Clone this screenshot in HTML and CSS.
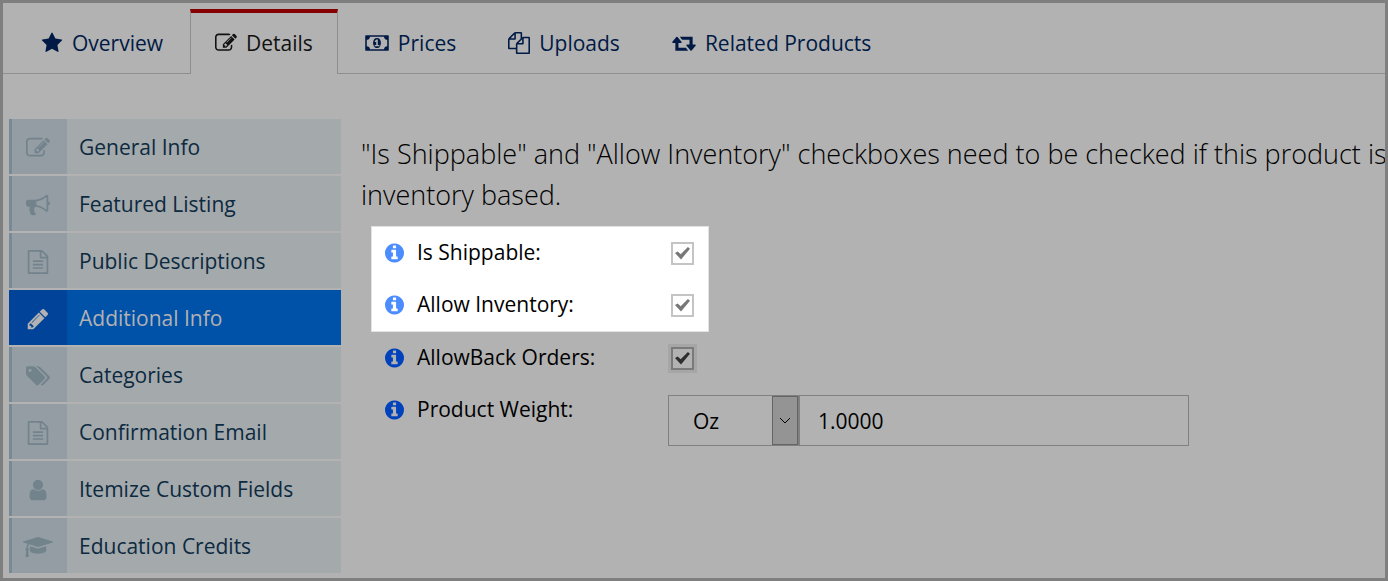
FILE: index.html
```html
<!DOCTYPE html>
<html lang="en">
<head>
    <meta charset="UTF-8">
    <meta name="viewport" content="width=device-width, initial-scale=1.0">
    <title>Product Details</title>
    <link rel="stylesheet" href="styles.css">
</head>
<body>
    <!-- shared icons -->
    <svg class="defs" aria-hidden="true">
        <symbol id="edit" viewBox="0 0 1792 1792"><path d="M888 1184l116-116-152-152-116 116v56h96v96h56zm440-720q-16-16-33 1l-350 350q-17 17-1 33t33-1l350-350q17-17 1-33zm80 594v190q0 119-84.5 203.5t-203.5 84.5h-832q-119 0-203.5-84.5t-84.5-203.5v-832q0-119 84.5-203.5t203.5-84.5h832q63 0 117 25 15 7 18 23 3 17-9 29l-49 49q-14 14-32 8-23-6-45-6h-832q-66 0-113 47t-47 113v832q0 66 47 113t113 47h832q66 0 113-47t47-113v-126q0-13 9-22l64-64q15-15 35-7t20 29zm-96-738l288 288-672 672h-288v-288zm444 132l-92 92-288-288 92-92q28-28 68-28t68 28l152 152q28 28 28 68t-28 68z"/></symbol>
        <symbol id="file" viewBox="0 0 1792 1792"><path d="M1596 380q28 28 48 76t20 88v1152q0 40-28 68t-68 28h-1344q-40 0-68-28t-28-68v-1600q0-40 28-68t68-28h896q40 0 88 20t76 48zm-444-244v376h376q-10-29-22-41l-313-313q-12-12-41-22zm384 1528v-1024h-416q-40 0-68-28t-28-68v-416h-768v1536h1280zm-1024-864q0-14 9-23t23-9h704q14 0 23 9t9 23v64q0 14-9 23t-23 9h-704q-14 0-23-9t-9-23v-64zm736 224q14 0 23 9t9 23v64q0 14-9 23t-23 9h-704q-14 0-23-9t-9-23v-64q0-14 9-23t23-9h704zm0 256q14 0 23 9t9 23v64q0 14-9 23t-23 9h-704q-14 0-23-9t-9-23v-64q0-14 9-23t23-9h704z"/></symbol>
        <symbol id="info" viewBox="128 128 1536 1536"><path d="M1152 1376v-160q0-14-9-23t-23-9h-96v-512q0-14-9-23t-23-9h-320q-14 0-23 9t-9 23v160q0 14 9 23t23 9h96v320h-96q-14 0-23 9t-9 23v160q0 14 9 23t23 9h448q14 0 23-9t9-23zm-128-896v-160q0-14-9-23t-23-9h-192q-14 0-23 9t-9 23v160q0 14 9 23t23 9h192q14 0 23-9t9-23zm640 416q0 209-103 385.5t-279.5 279.5-385.5 103-385.5-103-279.5-279.5-103-385.5 103-385.5 279.5-279.5 385.5-103 385.5 103 279.5 279.5 103 385.5z"/></symbol>
    </svg>

    <nav class="tabs">
        <a href="#" class="tab">
            <svg class="icon" viewBox="0 0 1792 1792"><path d="M1728 647q0 22-26 48l-363 354 86 500q1 7 1 20 0 21-10.5 35.5t-30.5 14.5q-19 0-40-12l-449-236-449 236q-22 12-40 12-21 0-31.5-14.5t-10.5-35.5q0-6 2-20l86-500-364-354q-25-27-25-48 0-37 56-46l502-73 225-455q19-41 49-41t49 41l225 455 502 73q56 9 56 46z"/></svg>
            Overview
        </a>
        <a href="#" class="tab active">
            <svg class="icon"><use href="#edit"/></svg>
            Details
        </a>
        <a href="#" class="tab">
            <svg class="icon wide" viewBox="0 0 1920 1792"><path d="M768 1152h384v-96h-128v-448h-114l-148 137 77 80q42-37 55-57h2v288h-128v96zm512-256q0 70-21 142t-59.5 134-101.5 101-138 39-138-39-101.5-101-59.5-134-21-142 21-142 59.5-134 101.5-101 138-39 138 39 101.5 101 59.5 134 21 142zm512 256v-512q-106 0-181-75t-75-181h-1152q0 106-75 181t-181 75v512q106 0 181 75t75 181h1152q0-106 75-181t181-75zm128-832v1152q0 26-19 45t-45 19h-1792q-26 0-45-19t-19-45v-1152q0-26 19-45t45-19h1792q26 0 45 19t19 45z"/></svg>
            Prices
        </a>
        <a href="#" class="tab">
            <svg class="icon" viewBox="0 0 1792 1792"><path d="M1696 384q40 0 68 28t28 68v1216q0 40-28 68t-68 28h-960q-40 0-68-28t-28-68v-288h-544q-40 0-68-28t-28-68v-672q0-40 20-88t48-76l408-408q28-28 76-48t88-20h416q40 0 68 28t28 68v328q68-40 128-40h416zm-544 213l-299 299h299v-299zm-640-384l-299 299h299v-299zm196 647l316-316v-416h-384v416q0 40-28 68t-68 28h-416v640h512v-256q0-40 20-88t48-76zm956 804v-1152h-384v416q0 40-28 68t-68 28h-416v640h896z"/></svg>
            Uploads
        </a>
        <a href="#" class="tab">
            <svg class="icon wide" viewBox="0 0 1920 1792"><path d="M1280 1504q0 13-9.5 22.5t-22.5 9.5h-960q-8 0-13.5-2t-9-7-5.5-8-3-11.5-1-11.5v-600h-192q-26 0-45-19t-19-45q0-24 15-41l320-384q19-22 49-22t49 22l320 384q15 17 15 41 0 26-19 45t-45 19h-192v384h576q16 0 25 11l160 192q7 10 7 21zm640-416q0 24-15 41l-320 384q-20 23-49 23t-49-23l-320-384q-15-17-15-41 0-26 19-45t45-19h192v-384h-576q-16 0-25-12l-160-192q-7-9-7-20 0-13 9.5-22.5t22.5-9.5h960q8 0 13.5 2t9 7 5.5 8 3 11.5 1 11.5v600h192q26 0 45 19t19 45z"/></svg>
            Related Products
        </a>
    </nav>

    <div class="content">
        <nav class="sidebar">
            <a href="#" class="item">
                <span class="item_icon"><svg class="icon"><use href="#edit"/></svg></span>
                General Info
            </a>
            <a href="#" class="item">
                <span class="item_icon"><svg class="icon" viewBox="0 0 1792 1792"><path d="M1664 640q53 0 90.5 37.5t37.5 90.5-37.5 90.5-90.5 37.5v384q0 52-38 90t-90 38q-417-347-812-380-58 19-91 66t-31 100.5 40 92.5q-20 33-23 65.5t6 58 33.5 55 48 50 61.5 50.5q-29 58-111.5 83t-168.5 11.5-132-55.5q-7-23-29.5-87.5t-32-94.5-23-89-15-101 3.5-98.5 22-110.5h-122q-66 0-113-47t-47-113v-192q0-66 47-113t113-47h480q435 0 896-384 52 0 90 38t38 90v384zm-128 604v-954q-394 302-768 343v270q377 42 768 341z"/></svg></span>
                Featured Listing
            </a>
            <a href="#" class="item">
                <span class="item_icon"><svg class="icon"><use href="#file"/></svg></span>
                Public Descriptions
            </a>
            <a href="#" class="item active">
                <span class="item_icon"><svg class="icon" viewBox="0 0 1792 1792"><path d="M491 1536l91-91-235-235-91 91v107h128v128h107zm523-928q0-22-22-22-10 0-17 7l-542 542q-7 7-7 17 0 22 22 22 10 0 17-7l542-542q7-7 7-17zm-54-192l416 416-832 832h-416v-416zm683 96q0 53-37 90l-166 166-416-416 166-165q36-38 90-38 53 0 91 38l235 234q37 39 37 91z"/></svg></span>
                Additional Info
            </a>
            <a href="#" class="item">
                <span class="item_icon"><svg class="icon" viewBox="0 0 1899 1792"><path d="M448 448q0-53-37.5-90.5t-90.5-37.5-90.5 37.5-37.5 90.5 37.5 90.5 90.5 37.5 90.5-37.5 37.5-90.5zm1067 576q0 53-37 90l-491 492q-39 37-91 37-53 0-90-37l-715-716q-38-37-64.5-101t-26.5-117v-416q0-52 38-90t90-38h416q53 0 117 26.5t102 64.5l715 714q37 39 37 91zm384 0q0 53-37 90l-491 492q-39 37-91 37-36 0-59-14t-53-45l470-470q37-37 37-90 0-52-37-91l-715-714q-38-38-102-64.5t-117-26.5h224q53 0 117 26.5t102 64.5l715 714q37 39 37 91z"/></svg></span>
                Categories
            </a>
            <a href="#" class="item">
                <span class="item_icon"><svg class="icon"><use href="#file"/></svg></span>
                Confirmation Email
            </a>
            <a href="#" class="item">
                <span class="item_icon"><svg class="icon" viewBox="0 0 1792 1792"><path d="M1536 1399q0 109-62.5 187t-150.5 78h-854q-88 0-150.5-78t-62.5-187q0-85 8.5-160.5t31.5-152 58.5-131 94-89 134.5-34.5q131 128 313 128t313-128q76 0 134.5 34.5t94 89 58.5 131 31.5 152 8.5 160.5zm-256-887q0 159-112.5 271.5t-271.5 112.5-271.5-112.5-112.5-271.5 112.5-271.5 271.5-112.5 271.5 112.5 112.5 271.5z"/></svg></span>
                Itemize Custom Fields
            </a>
            <a href="#" class="item">
                <span class="item_icon"><svg class="icon wide" viewBox="0 0 2304 1792"><path d="M1774 836l18 316q4 69-82 128t-235 93.5-323 34.5-323-34.5-235-93.5-82-128l18-316 574 181q22 7 48 7t48-7zm530-324q0 23-22 31l-1120 352q-4 1-10 1t-10-1l-652-206q-43 34-71 111.5t-34 178.5q63 36 63 109 0 69-58 107l58 433q2 14-8 25-9 11-24 11h-192q-15 0-24-11-10-11-8-25l58-433q-58-38-58-107 0-73 65-111 11-207 98-330l-333-104q-22-8-22-31t22-31l1120-352q4-1 10-1t10 1l1120 352q22 8 22 31z"/></svg></span>
                Education Credits
            </a>
        </nav>

        <form class="main">
            <p class="note">"Is Shippable" and "Allow Inventory" checkboxes need to be checked if this product is inventory based.</p>
            <div class="highlight">
                <div class="row">
                    <svg class="info"><use href="#info"/></svg>
                    <label for="shippable">Is Shippable:</label>
                    <input type="checkbox" id="shippable" class="check" checked>
                </div>
                <div class="row">
                    <svg class="info"><use href="#info"/></svg>
                    <label for="inventory">Allow Inventory:</label>
                    <input type="checkbox" id="inventory" class="check" checked>
                </div>
            </div>
            <div class="rest">
                <div class="row">
                    <svg class="info"><use href="#info"/></svg>
                    <label for="back_orders">AllowBack Orders:</label>
                    <input type="checkbox" id="back_orders" class="check" checked>
                </div>
                <div class="row">
                    <svg class="info"><use href="#info"/></svg>
                    <label for="weight">Product Weight:</label>
                    <div class="weight">
                        <div class="unit">
                            <select aria-label="Weight unit">
                                <option>Oz</option>
                                <option>Lb</option>
                            </select>
                            <span class="arrow"><svg viewBox="0 0 12 8"><path d="M1 1l5 5 5-5"/></svg></span>
                        </div>
                        <input type="text" id="weight" class="amount" value="1.0000">
                    </div>
                </div>
            </div>
        </form>
    </div>
</body>
</html>
```
FILE: styles.css
```css
*{
    margin: 0;
    padding: 0;
    box-sizing: border-box;
}
body{
    min-height: 100vh;
    border: 3px solid #7f7f7f;
    background-color: #b2b2b2;
    color: #000;
    font: 21px/30px "Open Sans", "Noto Sans", sans-serif;
    overflow-x: hidden;
}
a{
    color: #001a45;
    text-decoration: none;
}
.defs{
    display: none;
}
.icon{
    flex: none;
    width: 22px;
    height: 22px;
    fill: currentColor;
}
.tab .wide{
    width: 24px;
}
/* tabs */
.tabs{
    display: flex;
    gap: 2px;
    padding: 6px 0 0 13px;
    box-shadow: inset 0 -1px #8f8f8f;
}
.tab{
    display: flex;
    align-items: center;
    gap: 9px;
    height: 65px;
    padding: 2px 24px 0;
    border: 1px solid transparent;
    border-width: 0 1px;
}
.tab.active{
    padding: 0 24px 2px;
    border-color: #8f8f8f;
    border-top: 4px solid #850000;
    background-color: #b2b2b2;
    color: #111;
}
.content{
    display: flex;
    gap: 20px;
    padding: 45px 0 5px 6px;
}
/* left menu */
.sidebar{
    display: flex;
    flex: none;
    flex-direction: column;
    gap: 2px;
    width: 332px;
}
.item{
    display: flex;
    align-items: center;
    gap: 12px;
    height: 55px;
    background-color: #a4a9ac;
    color: #0c2a40;
}
.item_icon{
    display: flex;
    align-items: center;
    justify-content: center;
    width: 58px;
    height: 55px;
    padding: 2px 3px 0 0;
    border-left: 3px solid #788a93;
    background-color: #949da4;
    color: #72838c;
}
.item_icon .icon{
    width: 24px;
    height: 24px;
}
.item_icon .wide{
    width: 30px;
}
.item.active{
    background-color: #0051a8;
    color: #b2b2b2;
}
.item.active .item_icon{
    border-color: #004399;
    background-color: #004399;
    color: #b2b2b2;
}
/* form */
.main{
    flex: 1;
    min-width: 0;
    padding-top: 14px;
}
.note{
    margin: 0 -5px 11px 0;
    font-size: 27px;
    font-weight: 300;
    line-height: 41px;
}
.highlight{
    width: 338px;
    margin-left: 10px;
    border: 1px solid #e2e2e2;
    background-color: #fff;
}
.rest{
    padding-left: 11px;
}
.row{
    display: grid;
    grid-template-columns: 19px 238px 1fr;
    column-gap: 13px;
    padding-left: 13px;
}
.row label{
    line-height: 50px;
}
.info{
    width: 19px;
    height: 52px;
    fill: #0042bb;
}
.highlight .info{
    fill: #4b8cff;
}
.check{
    display: grid;
    place-items: center;
    align-self: center;
    width: 23px;
    height: 23px;
    margin-left: 3px;
    appearance: none;
    border: 2px solid #7a7a7a;
    outline: 3px solid #a6a6a6;
    color: #2e2e2e;
}
.highlight .check{
    border-color: #c4c4c4;
    outline: none;
    color: #777;
}
.check:checked::before{
    content: "";
    width: 15px;
    height: 13px;
    background-color: currentColor;
    clip-path: polygon(0 50%, 18% 38%, 38% 60%, 86% 4%, 100% 18%, 40% 100%);
}
.weight{
    display: flex;
    width: 521px;
    max-width: 100%;
    margin-top: 11px;
}
.unit{
    position: relative;
    width: 131px;
}
.unit select,
.amount{
    width: 100%;
    height: 51px;
    border: 1px solid #808080;
    border-radius: 0;
    background-color: transparent;
    color: #000;
    font: inherit;
}
.unit select{
    padding-left: 24px;
    appearance: none;
}
.arrow{
    position: absolute;
    top: 1px;
    right: 1px;
    bottom: 1px;
    display: flex;
    align-items: center;
    justify-content: center;
    width: 26px;
    border: 1px solid #646464;
    background-color: #949494;
    pointer-events: none;
}
.arrow svg{
    width: 12px;
    height: 8px;
    fill: none;
    stroke: #000;
}
.amount{
    flex: 1;
    min-width: 0;
    padding-left: 18px;
}
```
